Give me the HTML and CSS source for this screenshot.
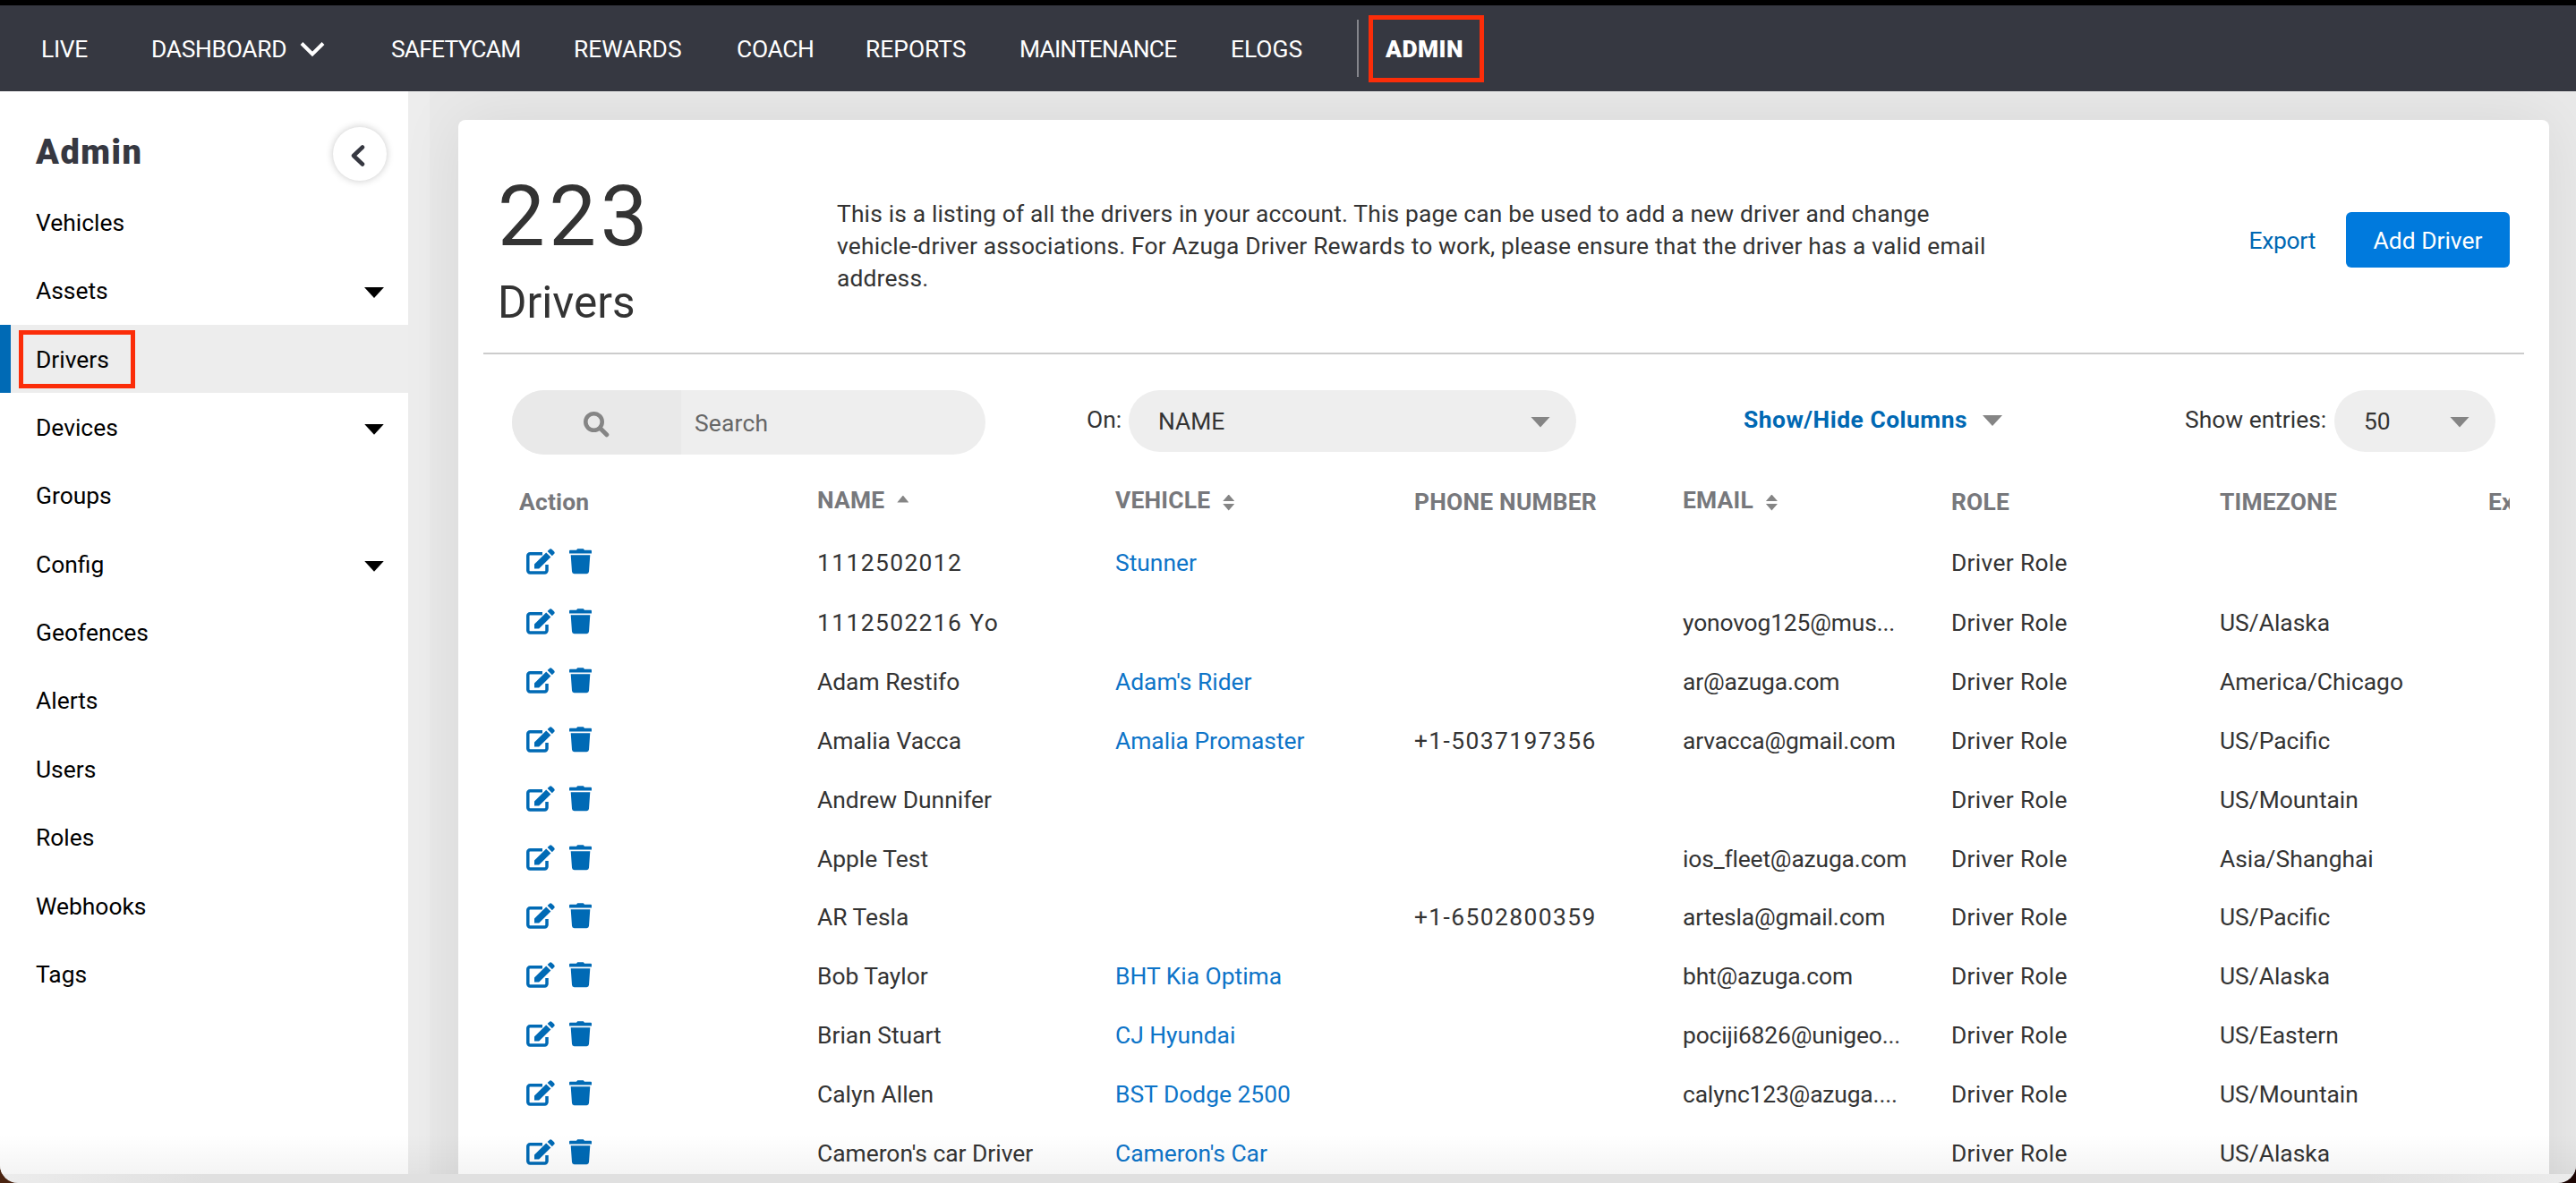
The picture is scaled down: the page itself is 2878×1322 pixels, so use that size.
FILE: index.html
```html
<!DOCTYPE html>
<html lang="en">
<head>
    <meta charset="UTF-8">
    <meta name="viewport" content="width=device-width, initial-scale=1.0">
    <title>Admin - Drivers</title>
    <link rel="stylesheet" href="styles.css">
</head>
<body>

    <!-- icons used in every row -->
    <svg class="sprite" width="0" height="0">
        <symbol id="edit" viewBox="0 0 32 29">
            <path d="M18 5.7H4.2a2.4 2.4 0 0 0-2.4 2.4v16.4a2.4 2.4 0 0 0 2.4 2.4h16.4a2.4 2.4 0 0 0 2.4-2.4V18" fill="none" stroke="currentColor" stroke-width="3.5"/>
            <path d="M9 22.6v-5L22.2 4.4l5.2 5.2L14.2 22.6z" fill="currentColor" stroke="#fff" stroke-width="1.4" paint-order="stroke"/>
            <path d="M23.6 3.1l2.2-2.2a2 2 0 0 1 2.8 0l2.4 2.4a2 2 0 0 1 0 2.8l-2.2 2.2z" fill="currentColor"/>
        </symbol>
        <symbol id="trash" viewBox="0 0 25 29">
            <path d="M1 1.8h7L9.2.3h6.6L17 1.8h7a1 1 0 0 1 1 1v2.7H0V2.8a1 1 0 0 1 1-1z" fill="currentColor"/>
            <path d="M1.7 7.3h21.6l-1.3 18.5a2.6 2.6 0 0 1-2.6 2.4H5.6A2.6 2.6 0 0 1 3 25.8z" fill="currentColor"/>
        </symbol>
    </svg>

    <div class="window">
        <header class="topnav">
            <a>LIVE</a>
            <a>DASHBOARD
                <svg class="chevron" width="28" height="18" viewBox="0 0 28 18"><path d="M2 2.5l12 12 12-12" fill="none" stroke="#fff" stroke-width="4"/></svg>
            </a>
            <a class="tight">SAFETYCAM</a>
            <a class="loose">REWARDS</a>
            <a>COACH</a>
            <a class="loose">REPORTS</a>
            <a class="tight">MAINTENANCE</a>
            <a class="loose">ELOGS</a>
            <span class="divider"></span>
            <a class="current">ADMIN</a>
        </header>

        <div class="page">
            <aside class="sidebar">
                <div class="sidebar-head">
                    <h2>Admin</h2>
                    <button class="collapse">
                        <svg width="16" height="24" viewBox="0 0 16 24"><path d="M13 2.5L3 12l10 9.5" fill="none" stroke="#363841" stroke-width="4.5" stroke-linecap="round" stroke-linejoin="round"/></svg>
                    </button>
                </div>
                <ul class="menu">
                    <li>Vehicles</li>
                    <li>Assets <i class="caret"></i></li>
                    <li class="active"><span>Drivers</span></li>
                    <li>Devices <i class="caret"></i></li>
                    <li>Groups</li>
                    <li>Config <i class="caret"></i></li>
                    <li>Geofences</li>
                    <li>Alerts</li>
                    <li>Users</li>
                    <li>Roles</li>
                    <li>Webhooks</li>
                    <li>Tags</li>
                </ul>
            </aside>

            <main class="content">
                <section class="card">
                    <div class="card-head">
                        <div class="total">
                            <div class="count">223</div>
                            <div class="label">Drivers</div>
                        </div>
                        <p class="about">This is a listing of all the drivers in your account. This page can be used to add a new driver and change<br>vehicle-driver associations. For Azuga Driver Rewards to work, please ensure that the driver has a valid email<br>address.</p>
                        <div class="actions">
                            <a class="export">Export</a>
                            <button class="add">Add Driver</button>
                        </div>
                    </div>

                    <div class="filters">
                        <div class="search">
                            <span class="search-icon">
                                <svg width="29" height="29" viewBox="0 0 29 29"><circle cx="11.5" cy="11.5" r="9.2" fill="none" stroke="#858585" stroke-width="4.6"/><path d="M18.5 18.5l7.3 7.3" stroke="#858585" stroke-width="5" stroke-linecap="round"/></svg>
                            </span>
                            <span class="search-text">Search</span>
                        </div>
                        <div class="on"><span>On:</span><div class="select wide">NAME <i class="caret grey"></i></div></div>
                        <div class="columns">Show/Hide Columns <i class="caret grey"></i></div>
                        <div class="entries"><span>Show entries:</span><div class="select small">50 <i class="caret grey"></i></div></div>
                    </div>

                    <div class="table" id="drivers">
                        <div class="row head">
                            <span>Action</span>
                            <span class="sort">NAME <i class="up"></i></span>
                            <span class="sort">VEHICLE <i class="both"></i></span>
                            <span>PHONE NUMBER</span>
                            <span class="sort">EMAIL <i class="both"></i></span>
                            <span>ROLE</span>
                            <span>TIMEZONE</span>
                            <span>Ex</span>
                        </div>
                    </div>
                </section>
            </main>
        </div>
        <div class="fade"></div>
    </div>

    <script>
        // name, vehicle, phone, email, timezone
        const drivers = [
            ["1112502012", "Stunner", "", "", ""],
            ["1112502216 Yo", "", "", "yonovog125@mus...", "US/Alaska"],
            ["Adam Restifo", "Adam's Rider", "", "ar@azuga.com", "America/Chicago"],
            ["Amalia Vacca", "Amalia Promaster", "+1-5037197356", "arvacca@gmail.com", "US/Pacific"],
            ["Andrew Dunnifer", "", "", "", "US/Mountain"],
            ["Apple Test", "", "", "ios_fleet@azuga.com", "Asia/Shanghai"],
            ["AR Tesla", "", "+1-6502800359", "artesla@gmail.com", "US/Pacific"],
            ["Bob Taylor", "BHT Kia Optima", "", "bht@azuga.com", "US/Alaska"],
            ["Brian Stuart", "CJ Hyundai", "", "pociji6826@unigeo...", "US/Eastern"],
            ["Calyn Allen", "BST Dodge 2500", "", "calync123@azuga....", "US/Mountain"],
            ["Cameron's car Driver", "Cameron's Car", "", "", "US/Alaska"]
        ];

        const table = document.getElementById("drivers");
        drivers.forEach(([name, vehicle, phone, email, timezone]) => {
            const wide = /^\d/.test(name) ? "digits" : "";
            table.insertAdjacentHTML("beforeend", `
                <div class="row">
                    <span class="icons"><svg width="32" height="29"><use href="#edit"/></svg><svg width="25" height="29"><use href="#trash"/></svg></span>
                    <span class="${wide}">${name}</span>
                    <span class="vehicle">${vehicle}</span>
                    <span class="digits">${phone}</span>
                    <span class="email">${email}</span>
                    <span class="role">Driver Role</span>
                    <span>${timezone}</span>
                    <span></span>
                </div>`);
        });
    </script>

</body>
</html>
```
FILE: styles.css
```css
* {
    box-sizing: border-box;
}
body {
    margin: 0;
    background: linear-gradient(to right, #4a2411, #1c0503);
    font-family: Roboto, "Liberation Sans", sans-serif;
    font-size: 26.4px;
    color: #333;
}
.sprite {
    display: block;
}
.window {
    position: relative;
    height: 1322px;
    overflow: hidden;
    border-top: 6px solid #000;
    border-radius: 0 0 20px 20px;
    background: linear-gradient(to right, #ececec, #e0e0e0 8%, #e0e0e0 92%, #ececec);
}

/* top navigation */
.topnav {
    display: grid;
    grid-template-columns: 123px 268px 204px 182px 144px 172px 236px 141px 13px 129px;
    align-items: center;
    height: 96px;
    padding-left: 46px;
    background: #363841;
    color: #fff;
    letter-spacing: -0.3px;
}
.topnav a {
    display: flex;
    align-items: center;
    white-space: nowrap;
    height: 75px;
    padding-top: 1px;
}
.topnav .tight {
    letter-spacing: -0.8px;
}
.topnav .loose {
    letter-spacing: 0;
}
.chevron {
    margin-left: 15px;
}
.divider {
    width: 2px;
    height: 64px;
    background: #85868c;
}
.topnav .current {
    justify-content: center;
    border: 5px solid #fb2d09;
    padding-right: 4px;
    font-weight: 900;
    letter-spacing: 0.5px;
}

.page {
    display: flex;
    height: 1210px;
}

/* sidebar */
.sidebar {
    width: 456px;
    background: #fff;
    color: #000;
}
.sidebar-head {
    display: flex;
    justify-content: space-between;
    height: 108px;
    padding: 40px 24px 0 40px;
}
.sidebar-head h2 {
    margin: 3px 0 0;
    font-size: 38px;
    line-height: 50px;
    font-weight: 900;
    letter-spacing: 1.5px;
    color: #363841;
}
.collapse {
    display: flex;
    align-items: center;
    justify-content: center;
    width: 60px;
    height: 60px;
    padding: 3px 4px 0 0;
    border: none;
    border-radius: 50%;
    background: #fff;
    box-shadow: 0 0 9px rgba(0,0,0,0.22);
}
.menu {
    margin: 0;
    padding: 0;
    list-style: none;
}
.menu li {
    display: flex;
    align-items: center;
    justify-content: space-between;
    height: 76.4px;
    padding: 1px 27px 0 40px;
}
.menu .active {
    padding: 1px 0 0 9px;
    border-left: 12px solid #006ab5;
    background: #ededed;
}
.menu .active span {
    height: 65px;
    width: 130px;
    padding-left: 14px;
    border: 5px solid #fb2d09;
    line-height: 57px;
}
.caret {
    width: 22px;
    height: 12px;
    margin-top: 2px;
    background: #000;
    clip-path: polygon(0 0, 100% 0, 50% 100%);
}
.menu .caret {
    margin-top: 4px;
}
.caret.grey {
    background: #858585;
}

/* main area */
.content {
    display: flex;
    width: 2422px;
    padding-left: 24px;
    overflow: hidden;
    background: linear-gradient(to right, #ededed 24px, #e9e9e9 24px);
}
.card {
    width: 2336px;
    height: 1300px;
    margin: 32px 0 0 32px;
    border-radius: 8px 8px 0 0;
    background: #fff;
    box-shadow: 0 0 70px rgba(0,0,0,0.08);
}
.card-head {
    display: flex;
    height: 262px;
    margin: 0 28px;
    padding: 0 16px;
    border-bottom: 2px solid #ccc;
}
.total {
    width: 379px;
    padding-top: 56px;
}
.count {
    font-size: 94px;
    line-height: 104px;
    letter-spacing: 4.5px;
}
.label {
    padding-top: 2px;
    font-size: 49.5px;
    line-height: 84px;
}
.about {
    width: 1340px;
    margin: 87px 0 0;
    line-height: 36.2px;
    letter-spacing: 0.16px;
    white-space: nowrap;
}
.actions {
    display: flex;
    align-items: center;
    gap: 34px;
    height: 62px;
    margin: 103px 0 0 auto;
}
.export {
    padding-top: 1px;
    color: #0068b3;
    letter-spacing: -0.3px;
}
.add {
    width: 183px;
    height: 62px;
    padding-top: 3px;
    border: none;
    border-radius: 6px;
    background: #007add;
    color: #fff;
    font: inherit;
}

/* filters */
.filters {
    display: flex;
    height: 72px;
    margin: 40px 60px 0;
}
.search {
    display: flex;
    align-items: center;
    width: 529px;
    height: 72px;
    border-radius: 36px;
    overflow: hidden;
    background: #eee;
    color: #666;
}
.search-icon {
    display: flex;
    align-items: center;
    justify-content: center;
    width: 189px;
    height: 72px;
    padding-top: 4px;
    background: #e9e9e9;
}
.search-text {
    padding: 1px 0 0 15px;
    letter-spacing: 0.2px;
}
.on,
.entries {
    display: flex;
    height: 69px;
    line-height: 66px;
}
.on {
    width: 547px;
    margin-left: 113px;
    justify-content: space-between;
}
.select {
    display: flex;
    align-items: center;
    justify-content: space-between;
    height: 69px;
    padding: 1px 29px 0 33px;
    border-radius: 35px;
    background: #eee;
}
.select .caret {
    margin-top: 1px;
}
.select.wide {
    width: 500px;
}
.select.small {
    width: 180px;
}
.columns {
    display: flex;
    align-items: center;
    gap: 17px;
    height: 66px;
    margin-left: 187px;
    color: #0068b3;
    font-weight: bold;
    letter-spacing: 0.5px;
}
.entries {
    width: 347px;
    margin-left: auto;
    justify-content: space-between;
    white-space: nowrap;
}

/* drivers table */
.table {
    width: 2224px;
    margin: 19px 0 0 68px;
    overflow: hidden;
}
.row {
    display: grid;
    grid-template-columns: 333px 333px 334px 300px 300px 300px 300px 300px;
    align-items: center;
    height: 65.9px;
    white-space: nowrap;
}
.row.head {
    height: 68px;
    color: #77787c;
    font-weight: bold;
    letter-spacing: 0.2px;
}
.head + .row {
    height: 68px;
}
.icons {
    display: flex;
    gap: 16px;
    margin-top: -3px;
    padding-left: 8px;
    color: #006ab5;
}
.vehicle {
    color: #0d74c8;
}
.digits {
    letter-spacing: 1.4px;
}
.email {
    letter-spacing: -0.15px;
}
.role {
    letter-spacing: 0.3px;
}
.sort {
    display: flex;
    align-items: center;
    gap: 14px;
    margin-top: -4px;
}
.sort i {
    width: 13px;
    height: 18px;
    background: #858585;
}
.sort .up {
    height: 8px;
    margin-top: -3px;
    clip-path: polygon(0 100%, 50% 0, 100% 100%);
}
.sort .both {
    margin-top: 5px;
    clip-path: polygon(0 42%, 50% 0, 100% 42%, 0 42%, 0 58%, 100% 58%, 50% 100%, 0 58%);
}

/* soft shade along the bottom edge of the window */
.fade {
    position: absolute;
    left: 0;
    right: 0;
    bottom: 10px;
    height: 44px;
    background: linear-gradient(to bottom, rgba(0,0,0,0), rgba(0,0,0,0.045));
}
```
